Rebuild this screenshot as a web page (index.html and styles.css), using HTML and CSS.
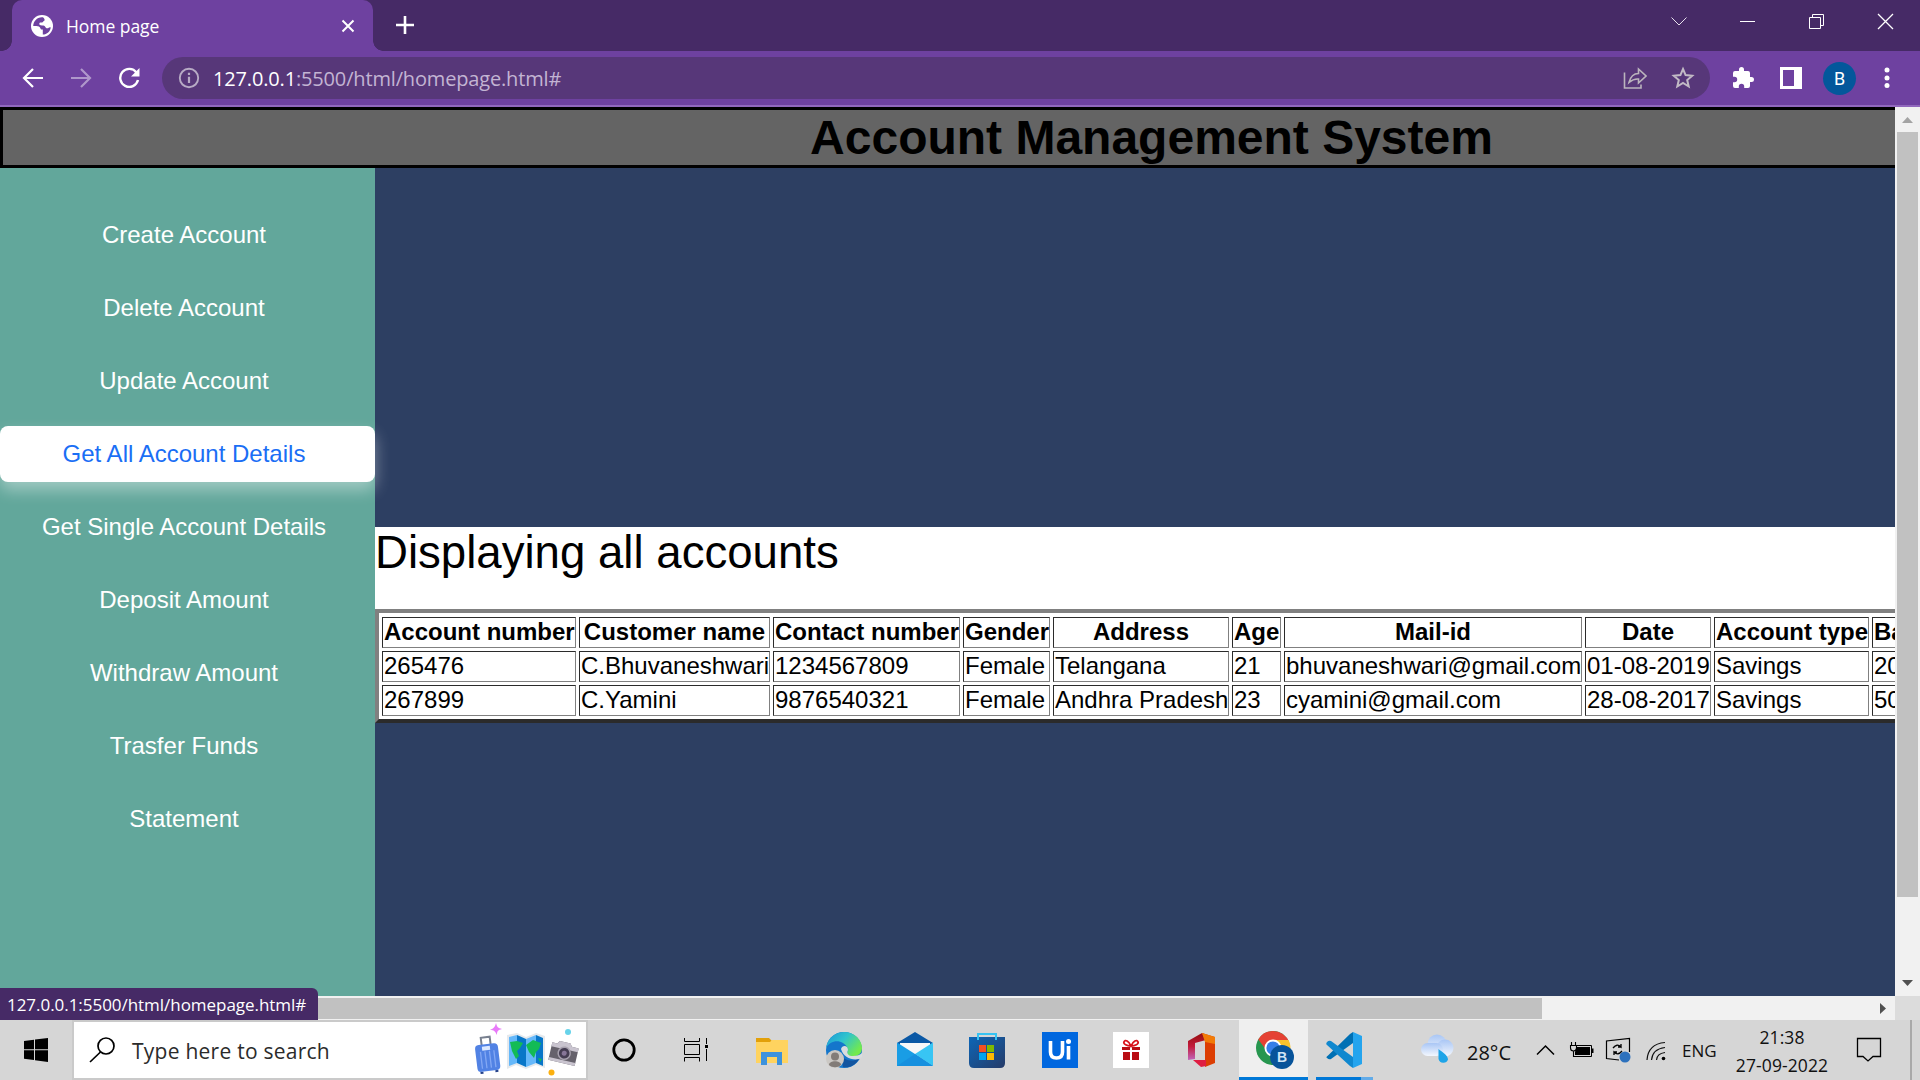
FILE: index.html
```html
<!DOCTYPE html>
<html lang="en">
<head>
<meta charset="utf-8">
<title>Home page</title>
<link rel="stylesheet" href="styles.css">
</head>
<body>
<div class="screen">
  <div class="tabstrip">
    <div class="tab">
      <svg class="globe" width="22" height="22" viewBox="0 0 22 22"><circle cx="11" cy="11" r="11" fill="#fff"/><path d="M12 2.200C6.500 1.500 2.300 6 2.200 11C5 11 7.500 10.800 8.800 12.200C9.800 13.300 9 14.500 11.800 14.600L11.800 19.600C16 19.500 19.300 16.500 19.700 12.500C18 11.500 17.500 14 15.500 13.200C14 12.600 14.500 11 12.500 10.600C10.500 10.300 8.500 10.800 8.300 9C8.200 7.400 9.500 7.300 11 7.500C12 7.600 12 6.300 13.200 5.800C14.200 5.300 13.500 3.500 12 2.200Z" fill="#6e41a0"/></svg>
      <span class="tab-title">Home page</span>
      <svg class="tab-close" width="14" height="14" viewBox="0 0 14 14"><path d="M1.500 1.500L12.500 12.500M12.500 1.500L1.500 12.500" stroke="#fff" stroke-width="2"/></svg>
    </div>
    <svg class="new-tab" width="20" height="20" viewBox="0 0 20 20"><path d="M10 1V19M1 10H19" stroke="#fff" stroke-width="2.600"/></svg>
    <div class="caption">
      <svg width="69" height="42" viewBox="0 0 69 42"><path d="M27.500 17.500L35 25L42.500 17.500" fill="none" stroke="#e6e0ec" stroke-width="1"/></svg>
      <svg width="69" height="42" viewBox="0 0 69 42"><path d="M27 21.500H42" stroke="#fff"/></svg>
      <svg width="69" height="42" viewBox="0 0 69 42"><path d="M27.500 17.500H38.500V28.500H27.500ZM30.500 17.500V14.500H41.500V25.500H38.500" fill="none" stroke="#fff"/></svg>
      <svg width="69" height="42" viewBox="0 0 69 42"><path d="M27 14L42 29M42 14L27 29" stroke="#fff" stroke-width="1.300"/></svg>
    </div>
  </div>

  <div class="toolbar">
    <div class="nav">
      <svg width="22" height="22" viewBox="0 0 22 22"><path d="M21 11H3M11 2L2 11L11 20" fill="none" stroke="#fff" stroke-width="2.200"/></svg>
      <svg class="dim" width="22" height="22" viewBox="0 0 22 22"><path d="M1 11H19M11 2L20 11L11 20" fill="none" stroke="#fff" stroke-width="2.200"/></svg>
      <svg width="22" height="22" viewBox="0 0 22 22"><path d="M18.500 5.500A9 9 0 1 0 20 13" fill="none" stroke="#fff" stroke-width="2.400"/><path d="M21.500 1V9.500H13Z" fill="#fff"/></svg>
    </div>
    <div class="omnibox">
      <svg width="22" height="22" viewBox="0 0 22 22"><circle cx="11" cy="11" r="9.200" fill="none" stroke="#b7abc5" stroke-width="1.900"/><path d="M11 9.700V16M11 5.800V8" stroke="#b7abc5" stroke-width="2.200"/></svg>
      <span class="url"><b>127.0.0.1</b>:5500/html/homepage.html#</span>
      <svg class="share" width="24" height="24" viewBox="0 0 24 24"><path d="M1.500 6.500V22H18V18.500" fill="none" stroke="#bbb5bd" stroke-width="1.600"/><path d="M6 16.500C7.500 10.500 11 7.500 15.500 7.500V3L23 10L15.500 17V13C11.500 12.500 9 14 6 16.500Z" fill="none" stroke="#bbb5bd" stroke-width="1.600"/></svg>
      <svg class="star" width="24" height="24" viewBox="0 0 24 24"><path d="M12 3L14.600 9.100L21.200 9.700L16.200 14L17.700 20.500L12 17L6.300 20.500L7.800 14L2.800 9.700L9.400 9.100Z" fill="none" stroke="#c2bac5" stroke-width="2"/></svg>
    </div>
    <div class="actions">
      <svg width="24" height="24" viewBox="0 0 24 24"><path d="M20.500 11H19V7a2 2 0 0 0-2-2H13V3.500a2.500 2.500 0 0 0-5 0V5H4a2 2 0 0 0-2 2v3.800h1.500a2.700 2.700 0 0 1 0 5.400H2V20a2 2 0 0 0 2 2h3.800v-1.500a2.700 2.700 0 0 1 5.400 0V22H17a2 2 0 0 0 2-2v-4h1.500a2.500 2.500 0 0 0 0-5z" fill="#fff"/></svg>
      <svg class="panel" width="22" height="22" viewBox="0 0 22 22"><path d="M0 0H22V22H0ZM3 3V19H14V3Z" fill="#fff" fill-rule="evenodd"/></svg>
      <span class="avatar">B</span>
      <svg class="menu" width="6" height="22" viewBox="0 0 6 22"><g fill="#fff"><circle cx="3" cy="3" r="2.500"/><circle cx="3" cy="11" r="2.500"/><circle cx="3" cy="18.500" r="2.500"/></g></svg>
    </div>
  </div>

  <div class="viewport">
    <div class="page">
      <h1 class="banner">Account Management System</h1>
      <div class="columns">
        <nav class="sidebar">
          <a>Create Account</a>
          <a>Delete Account</a>
          <a>Update Account</a>
          <a class="active">Get All Account Details</a>
          <a>Get Single Account Details</a>
          <a>Deposit Amount</a>
          <a>Withdraw Amount</a>
          <a>Trasfer Funds</a>
          <a>Statement</a>
        </nav>
        <main class="content">
          <section class="accounts">
            <p class="heading">Displaying all accounts</p>
            <table class="grid">
              <colgroup><col class="c-num"><col class="c-name"><col class="c-contact"><col class="c-gender"><col class="c-address"><col class="c-age"><col class="c-mail"><col class="c-date"><col class="c-type"><col></colgroup>
              <tr><th>Account number</th><th>Customer name</th><th>Contact number</th><th>Gender</th><th>Address</th><th>Age</th><th>Mail-id</th><th>Date</th><th>Account type</th><th class="last">Balance</th></tr>
              <tr><td>265476</td><td>C.Bhuvaneshwari</td><td>1234567809</td><td>Female</td><td>Telangana</td><td>21</td><td>bhuvaneshwari@gmail.com</td><td>01-08-2019</td><td>Savings</td><td>20000</td></tr>
              <tr><td>267899</td><td>C.Yamini</td><td>9876540321</td><td>Female</td><td>Andhra Pradesh</td><td>23</td><td>cyamini@gmail.com</td><td>28-08-2017</td><td>Savings</td><td>50000</td></tr>
            </table>
          </section>
        </main>
      </div>
    </div>
    <div class="vscroll">
      <svg width="25" height="25" viewBox="0 0 25 25"><path d="M7 16L12.500 10L18 16Z" fill="#a3a3a3"/></svg>
      <span class="vthumb"></span>
      <svg class="vdown" width="25" height="25" viewBox="0 0 25 25"><path d="M7 9L12.500 15L18 9Z" fill="#505050"/></svg>
    </div>
    <div class="hscroll">
      <span class="hthumb"></span>
      <svg width="25" height="24" viewBox="0 0 25 24"><path d="M10 7V18L16 12.500Z" fill="#505050"/></svg>
    </div>
    <div class="corner"></div>
    <div class="status">127.0.0.1:5500/html/homepage.html#</div>
  </div>

  <div class="taskbar">
    <div class="start"><svg width="24" height="24" viewBox="0 0 24 24"><path d="M0 3L10 1.700V11.300H0ZM11 1.500L24 0V11.300H11ZM0 12.300H10V22L0 20.800ZM11 12.300H24V24L11 22.300Z"/></svg></div>
    <div class="search">
      <svg width="26" height="26" viewBox="0 0 26 26"><circle cx="17" cy="9" r="8" fill="none" stroke="#000" stroke-width="1.700"/><path d="M11.500 15L1 25" stroke="#000" stroke-width="1.700"/></svg>
      <span class="search-text">Type here to search</span>
      <svg class="travel" width="110" height="56" viewBox="0 0 110 56">
        <path d="M26 1C27 5 28 6 32 7C28 8 27 9 27 13C25 9 24 8 20 8C24 6 25 5 26 1Z" fill="#e879f9"/>
        <circle cx="98" cy="10" r="3" fill="#67d3ea"/><circle cx="81.500" cy="50.500" r="3" fill="#fcb00f"/>
        <g transform="rotate(-7 18 34)"><path d="M13 24V15H22V24" fill="none" stroke="#78808f" stroke-width="2"/><rect x="6" y="22" width="23" height="27" rx="4" fill="#5182e4"/><path d="M11 29V46M15.500 29V46M20 29V46M24.500 29V46" stroke="#83a8f4" stroke-width="1.300"/><path d="M13 24H21V28H13Z" fill="#dbe8ff"/><path d="M10 49V51M25 49V51" stroke="#24418a" stroke-width="3"/></g>
        <path d="M37 13L47 11L56 15L66 11L75 14V46L66 43L56 47L46 43L37 47Z" fill="#e5e9ed"/>
        <path d="M39 15L47 13V41L39 44ZM56 17L66 13V41L56 45Z" fill="#65b8fa"/><path d="M47 13L56 17V45L47 41ZM66 13L73 16V44L66 41Z" fill="#0876c8"/>
        <path d="M40 20L47 19L53 21L50 26L47 29L49 34L46 37L42 29ZM56 23L63 18L71 21L69 27L66 30L64 36L59 30ZM68 36L72 37L70 40Z" fill="#13bb55"/>
        <g transform="rotate(13 93 32)"><path d="M80 23H85L87 20H98L100 23H107V41H80Z" fill="#66626c"/><path d="M80 23H85L87 20H98L100 23H107V27H80ZM80 38H107V41H80Z" fill="#c9c4cf"/><circle cx="94" cy="31" r="6.800" fill="#a7a1ae"/><circle cx="94" cy="31" r="5.300" fill="#453d52"/><circle cx="94" cy="31" r="2.500" fill="#877698"/></g>
      </svg>
    </div>
    <div class="slot first"><svg width="28" height="28" viewBox="0 0 28 28"><circle cx="14" cy="14" r="10.200" fill="none" stroke="#000" stroke-width="2.800"/></svg></div>
    <div class="slot second"><svg width="26" height="26" viewBox="0 0 26 26"><path d="M1.500 1V4.500H16.500V1M1.500 7.500H16.500V17.500H1.500ZM1.500 24.500V20.500H16.500V24.500M23.500 1V7M23.500 12V24" fill="none" stroke="#000" stroke-width="1"/><path d="M22 8H25V11H22Z"/></svg></div>
    <div class="slot"><svg width="34" height="30" viewBox="0 0 34 30"><path d="M1 3H14L17 6V12H1Z" fill="#e2a009"/><path d="M1 7H15L17 5H33V28H1Z" fill="#ffd35f"/><path d="M6 30V17H27V30H22V22H12V30Z" fill="#3d92dc"/></svg></div>
    <div class="slot"><svg width="36" height="36" viewBox="0 0 36 36"><defs><linearGradient id="ea" x1="0" y1="0" x2="1" y2=".6"><stop offset="0" stop-color="#1b96d8"/><stop offset=".5" stop-color="#2fc4cd"/><stop offset="1" stop-color="#73ea4c"/></linearGradient></defs><circle cx="18" cy="18" r="18" fill="#1476cb"/><path d="M0 16C2 5 10 0 18 0C29 0 36 8 36 16C36 22 31 25 25 24L20 23C23 19 22 14 17 11C11 7 3 10 0 16Z" fill="url(#ea)"/><path d="M15 17C16 13 22 13 22 18C20 22 23 24 27 24C31 24 34 23 36 21L36 25L33.500 27C26 29 17 25 15 17Z" fill="#d9dcde"/><path d="M16 24C20 30 28 29 33 27C29 34 23 36 17 35Z" fill="#1355a0"/><circle cx="9" cy="27" r="9" fill="#cbc8c4"/><circle cx="9" cy="24.500" r="4" fill="#827c78"/><path d="M3 33C3 28 15 28 15 33C12 36 6 36 3 33Z" fill="#827c78"/></svg></div>
    <div class="slot"><svg width="36" height="36" viewBox="0 0 36 36"><path d="M0 11L18 0L36 11V17H0Z" fill="#0a58a5"/><path d="M3 11H33V18L18 26L3 18Z" fill="#f6f7f8"/><path d="M0 10.500L18 22L36 34H0Z" fill="#199de5"/><path d="M36 10.500L18 22L36 34Z" fill="#38c5f4"/><path d="M0 34L18 22L36 34Z" fill="#1690df"/></svg></div>
    <div class="slot"><svg width="36" height="36" viewBox="0 0 36 36"><defs><linearGradient id="sb" x1="0" y1="0" x2="1" y2="1"><stop offset="0" stop-color="#0d66b7"/><stop offset="1" stop-color="#263b68"/></linearGradient></defs><path d="M0 5H36V31Q36 36 31 36H5Q0 36 0 31Z" fill="url(#sb)"/><path d="M9 8V2H27V8" fill="none" stroke="#36c3f2" stroke-width="2"/><path d="M10 13H17V20H10Z" fill="#f25022"/><path d="M18 13H25V20H18Z" fill="#7fba00"/><path d="M10 21H17V28H10Z" fill="#00a4ef"/><path d="M18 21H25V28H18Z" fill="#ffb900"/></svg></div>
    <div class="slot uipath"><svg width="36" height="36" viewBox="0 0 36 36"><path d="M0 0H36V36H0Z" fill="#0067df"/><path d="M8.500 9V20Q8.500 26 14.500 26Q20.500 26 20.500 20V9M26.500 14V27.500" fill="none" stroke="#fff" stroke-width="3.600"/><circle cx="26.500" cy="9.500" r="2.500" fill="#fff"/></svg></div>
    <div class="slot"><svg width="36" height="36" viewBox="0 0 36 36"><path d="M0 0H36V36H0Z" fill="#fff"/><path d="M9 15H17V18H9ZM19 15H27V18H19ZM10 20H17V28H10ZM19 20H26V28H19Z" fill="#b90d14"/><path d="M18 14C14 14 10 12 11 10C12 7 16 9 18 14C20 9 24 7 25 10C26 12 22 14 18 14" fill="none" stroke="#d9121b" stroke-width="1.800"/></svg></div>
    <div class="slot"><svg width="30" height="36" viewBox="0 0 30 36"><defs><linearGradient id="of" x1="0" y1="0" x2="0" y2="1"><stop offset="0" stop-color="#940d0e"/><stop offset=".5" stop-color="#c31c3c"/><stop offset="1" stop-color="#c065bb"/></linearGradient></defs><path d="M1 9L15 1L19 3V8L8 11V27L1 28Z" fill="url(#of)"/><path d="M15 1L28 5V31L18 35V8Z" fill="#dc3e03"/><path d="M15 1L28 5V12L18 10Z" fill="#f27b08"/><path d="M6 28H19V34L14 35Z" fill="#df1e42"/></svg></div>
    <div class="slot running"><svg width="40" height="40" viewBox="0 0 40 40"><circle cx="18" cy="18" r="17" fill="#27964f"/><path d="M18 1A17 17 0 0 1 34 12H18L12 21L3.300 9.500A17 17 0 0 1 18 1Z" fill="#e54234"/><path d="M18 10H33.500A17 17 0 0 1 18 35L25 21Z" fill="#f9c32c"/><circle cx="18" cy="18" r="8.500" fill="#fff"/><circle cx="18" cy="18" r="6.600" fill="#367fe8"/><circle cx="27" cy="27" r="12" fill="#07539a"/><text class="badge-b" x="27" y="32" text-anchor="middle">B</text></svg></div>
    <div class="slot grouped"><svg width="36" height="36" viewBox="0 0 36 36"><path d="M2 23.500L24 2L27 0V11L5 27Q3 28 1 26Q-.5 25 2 23.500Z" fill="#0070b4"/><path d="M1 10Q3 8 5 9L27 25V36L24 34L1 13Q-.5 12 1 10Z" fill="#1088cf"/><path d="M27 0L36 4V32L27 36Z" fill="#24a4ee"/></svg></div>
    <div class="tray">
      <svg class="weather" width="34" height="32" viewBox="0 0 34 32"><defs><linearGradient id="cl" x1="0" y1="0" x2="0" y2="1"><stop offset="0" stop-color="#a9c6f5"/><stop offset="1" stop-color="#f3f7fe"/></linearGradient></defs><circle cx="17" cy="10" r="9.500" fill="url(#cl)"/><circle cx="25" cy="14" r="8.500" fill="url(#cl)"/><rect x="1" y="9" width="22" height="13" rx="6.500" fill="url(#cl)"/><path d="M18.500 15C22 18 28 21 28 25.500A5 5 0 0 1 18.500 25Z" fill="#1ea4e8"/></svg>
      <span class="temp">28°C</span>
      <svg class="chev" width="19" height="12" viewBox="0 0 19 12"><path d="M1 10.500L9.500 2L18 10.500" fill="none" stroke="#000" stroke-width="1.500"/></svg>
      <svg class="battery" width="26" height="18" viewBox="0 0 26 18"><path d="M8 4.500H22.500V15.500H4" fill="none" stroke="#000" stroke-width="1"/><path d="M7.500 6H21V14H6V11ZM23 7.500H24.500V12H23Z"/><path d="M2.500 1V4M6.500 1V4M1.500 4.500H7.500V7Q7.500 10 4.500 10Q1.500 10 1.500 7ZM4.500 10V16" fill="none" stroke="#000" stroke-width="1.100"/></svg>
      <svg class="update" width="26" height="26" viewBox="0 0 26 26"><path d="M14 23L1.500 21.500V4L24.500 1.500V15" fill="none" stroke="#000" stroke-width="1.200"/><path d="M8 11Q12 6 16 10V7M16 10H13M17 14Q13 19 9 15V18M9 15H12" fill="none" stroke="#000" stroke-width="1.300"/><circle cx="20" cy="20" r="5.500" fill="#2d71bd"/></svg>
      <svg class="wifi" width="21" height="20" viewBox="0 0 21 20"><path d="M1 19Q2 3 19 1.500M5.500 19Q6.500 8 19 6.500M10.500 19Q11 12.500 19 11.500" fill="none" stroke="#111" stroke-width="1.200"/><circle cx="17.500" cy="17.500" r="1.800"/></svg>
      <span class="lang">ENG</span>
      <div class="clock"><span>21:38</span><span>27-09-2022</span></div>
      <svg class="notify" width="26" height="26" viewBox="0 0 26 26"><path d="M1.500 1.500H24.500V19.500H17L12 24L7 19.500H1.500Z" fill="none" stroke="#000" stroke-width="1.300"/></svg>
      <span class="peek"></span>
    </div>
  </div>
</div>
</body>
</html>
```
FILE: styles.css
```css
* { box-sizing: border-box; }
body { margin: 0; overflow: hidden; }
svg { display: block; flex: none; }
.screen {
  width: 1920px; height: 1080px;
  display: grid; grid-template-rows: 51px 56px 913px 60px;
  font-family: "Open Sans", "Noto Sans", sans-serif;
  overflow: hidden;
}

/* Browser frame */
.tabstrip { background: #462a66; display: flex; align-items: flex-start; padding-left: 12px; }
.tab {
  position: relative; width: 361px; height: 51px; background: #6e41a0;
  border-radius: 10px 10px 0 0; display: flex; align-items: center; padding: 0 18px 0 19px;
}
.tab::before, .tab::after { content: ""; position: absolute; bottom: 0; width: 10px; height: 10px; }
.tab::before { left: -10px; background: radial-gradient(circle at 0 0, transparent 9.5px, #6e41a0 10px); }
.tab::after { right: -10px; background: radial-gradient(circle at 100% 0, transparent 9.5px, #6e41a0 10px); }
.tab-title { margin-left: 13px; font-size: 17.5px; letter-spacing: -.05px; color: #fff; }
.tab-close { margin-left: auto; }
.new-tab { margin: 15px 0 0 22px; }
.caption { margin-left: auto; display: flex; }

.toolbar {
  background: #6e41a0; border-bottom: 2px solid #9168bd;
  display: flex; align-items: center; padding: 0 30px 0 22px;
}
.nav { display: flex; gap: 26px; }
.dim { opacity: .45; }
.omnibox {
  margin-left: 22px; width: 1548px; height: 42px; border-radius: 21px; background: #573779;
  display: flex; align-items: center; padding: 0 15px 0 16px;
}
.url { margin-left: 13px; font-size: 20px; letter-spacing: -.16px; color: #c3b4d3; }
.url b { font-weight: 400; color: #fff; }
.share { margin-left: auto; }
.star { margin-left: 24px; }
.actions { flex: 1; margin-left: 21px; display: flex; align-items: center; }
.panel { margin-left: 25px; }
.avatar {
  margin-left: 21px; width: 33px; height: 33px; border-radius: 50%; background: #03579b; color: #fff;
  font: 18px/33px Roboto, sans-serif; text-align: center;
}
.menu { margin-left: auto; }

/* Web page area */
.viewport {
  position: relative; display: grid;
  grid-template: 889px 24px / 1895px 25px; overflow: hidden;
}
.page { overflow: hidden; background: #2d3f62; display: flex; flex-direction: column; font-family: "Liberation Sans", Arial, sans-serif; }
.banner {
  margin: 0; flex: none; width: 2303px; height: 61px; border: 3px solid #000; background: #646464;
  font-size: 48px; line-height: 55px; text-align: center; color: #000;
}
.columns { flex: 1; display: flex; }
.sidebar {
  flex: none; width: 375px; background: #62a79b; padding-top: 39px; position: relative;
  display: flex; flex-direction: column; gap: 17px;
}
.sidebar a {
  height: 56px; line-height: 56px; padding-right: 7px; border-radius: 8px;
  font-size: 24px; color: #fff; text-align: center;
}
.sidebar .active { background: #fff; color: #1a6ef5; box-shadow: 0 8px 16px rgba(255, 255, 255, .4); }
.content { flex: none; width: 1928px; padding-top: 359px; }
.accounts { background: #fff; height: 196px; color: #000; }
.heading { margin: 0; height: 82px; font-size: 45.6px; line-height: 51px; }
.grid {
  table-layout: fixed; width: 1928px; height: 114px;
  border: 4px solid; border-color: #808080 #2b2b2b #2b2b2b #808080;
  border-collapse: separate; border-spacing: 3px; padding-top: 1px;
  font-size: 24px; line-height: 27px; white-space: nowrap;
}
.grid th, .grid td {
  height: 31px; padding: 0 1px 2px; overflow: hidden;
  border: 1px solid; border-color: #2b2b2b #808080 #808080 #2b2b2b;
}
.grid td { text-align: left; }
.grid .last { text-align: left; }
.c-num { width: 194px; }
.c-name { width: 191px; }
.c-contact { width: 187px; }
.c-gender { width: 87px; }
.c-address { width: 176px; }
.c-age { width: 49px; }
.c-mail { width: 298px; }
.c-date { width: 126px; }
.c-type { width: 155px; }

.vscroll { background: #f1f1f1; display: flex; flex-direction: column; }
.vthumb { width: 21px; height: 765px; margin-left: 2px; background: #c1c1c1; }
.vdown { margin-top: auto; }
.hscroll { background: #f1f1f1; display: flex; align-items: center; justify-content: space-between; }
.hthumb { width: 1517px; height: 21px; margin-left: 25px; background: #c1c1c1; }
.corner { background: #dcdcdc; }
.status {
  position: absolute; left: 0; bottom: 0; width: 318px; height: 32px; padding-left: 7px;
  border-radius: 0 6px 0 0; background: #462a66; color: #fff; font-size: 17px; letter-spacing: -.04px; line-height: 33px; white-space: nowrap;
}

/* Taskbar */
.taskbar { background: #d6d6d6; display: flex; color: #111; }
.start { width: 72px; display: flex; align-items: center; justify-content: center; }
.search {
  width: 516px; border: 2px solid #cacaca; background: #fff;
  display: flex; align-items: center; padding: 0 6px 0 15px;
}
.search-text { margin-left: 17px; padding-top: 2px; font-size: 21px; letter-spacing: .25px; color: #2b2b2b; white-space: nowrap; }
.travel { margin-left: auto; }
.slot { width: 71.75px; display: flex; align-items: center; justify-content: center; }
.first { width: 72px; }
.second { width: 76px; padding-right: 4px; }
.uipath { padding-left: 2px; }
.running { width: 69px; margin: 0 1px; padding-left: 3px; background: #efefef; border-bottom: 3px solid #0078d7; }
.running svg { margin-top: 3px; }
.grouped { position: relative; padding-right: 2px; }
.grouped::after {
  content: ""; position: absolute; left: 7px; bottom: 0; width: 57px; height: 3px;
  background: linear-gradient(90deg, #0078d7 45px, #62abe8 45px);
}
.badge-b { font: bold 14px "Liberation Sans", sans-serif; fill: #cfe4f5; }
.tray { flex: 1; display: flex; align-items: center; margin-left: 39px; white-space: nowrap; }
.temp { margin-left: 13px; width: 62px; font-size: 20px; padding-top: 4px; }
.chev { margin-left: 7px; }
.battery { margin-left: 14px; }
.update { margin-left: 10px; }
.wifi { margin: 2px 0 0 15px; }
.lang { margin-left: 15px; width: 40px; font-size: 17px; }
.clock { width: 110px; margin-left: 5px; display: flex; flex-direction: column; align-items: center; font-size: 17.5px; letter-spacing: .1px; line-height: 28px; padding-top: 1px; }
.notify { margin-left: 19px; }
.peek { align-self: stretch; width: 2px; margin-left: 28px; background: #a9a9a9; }
```
